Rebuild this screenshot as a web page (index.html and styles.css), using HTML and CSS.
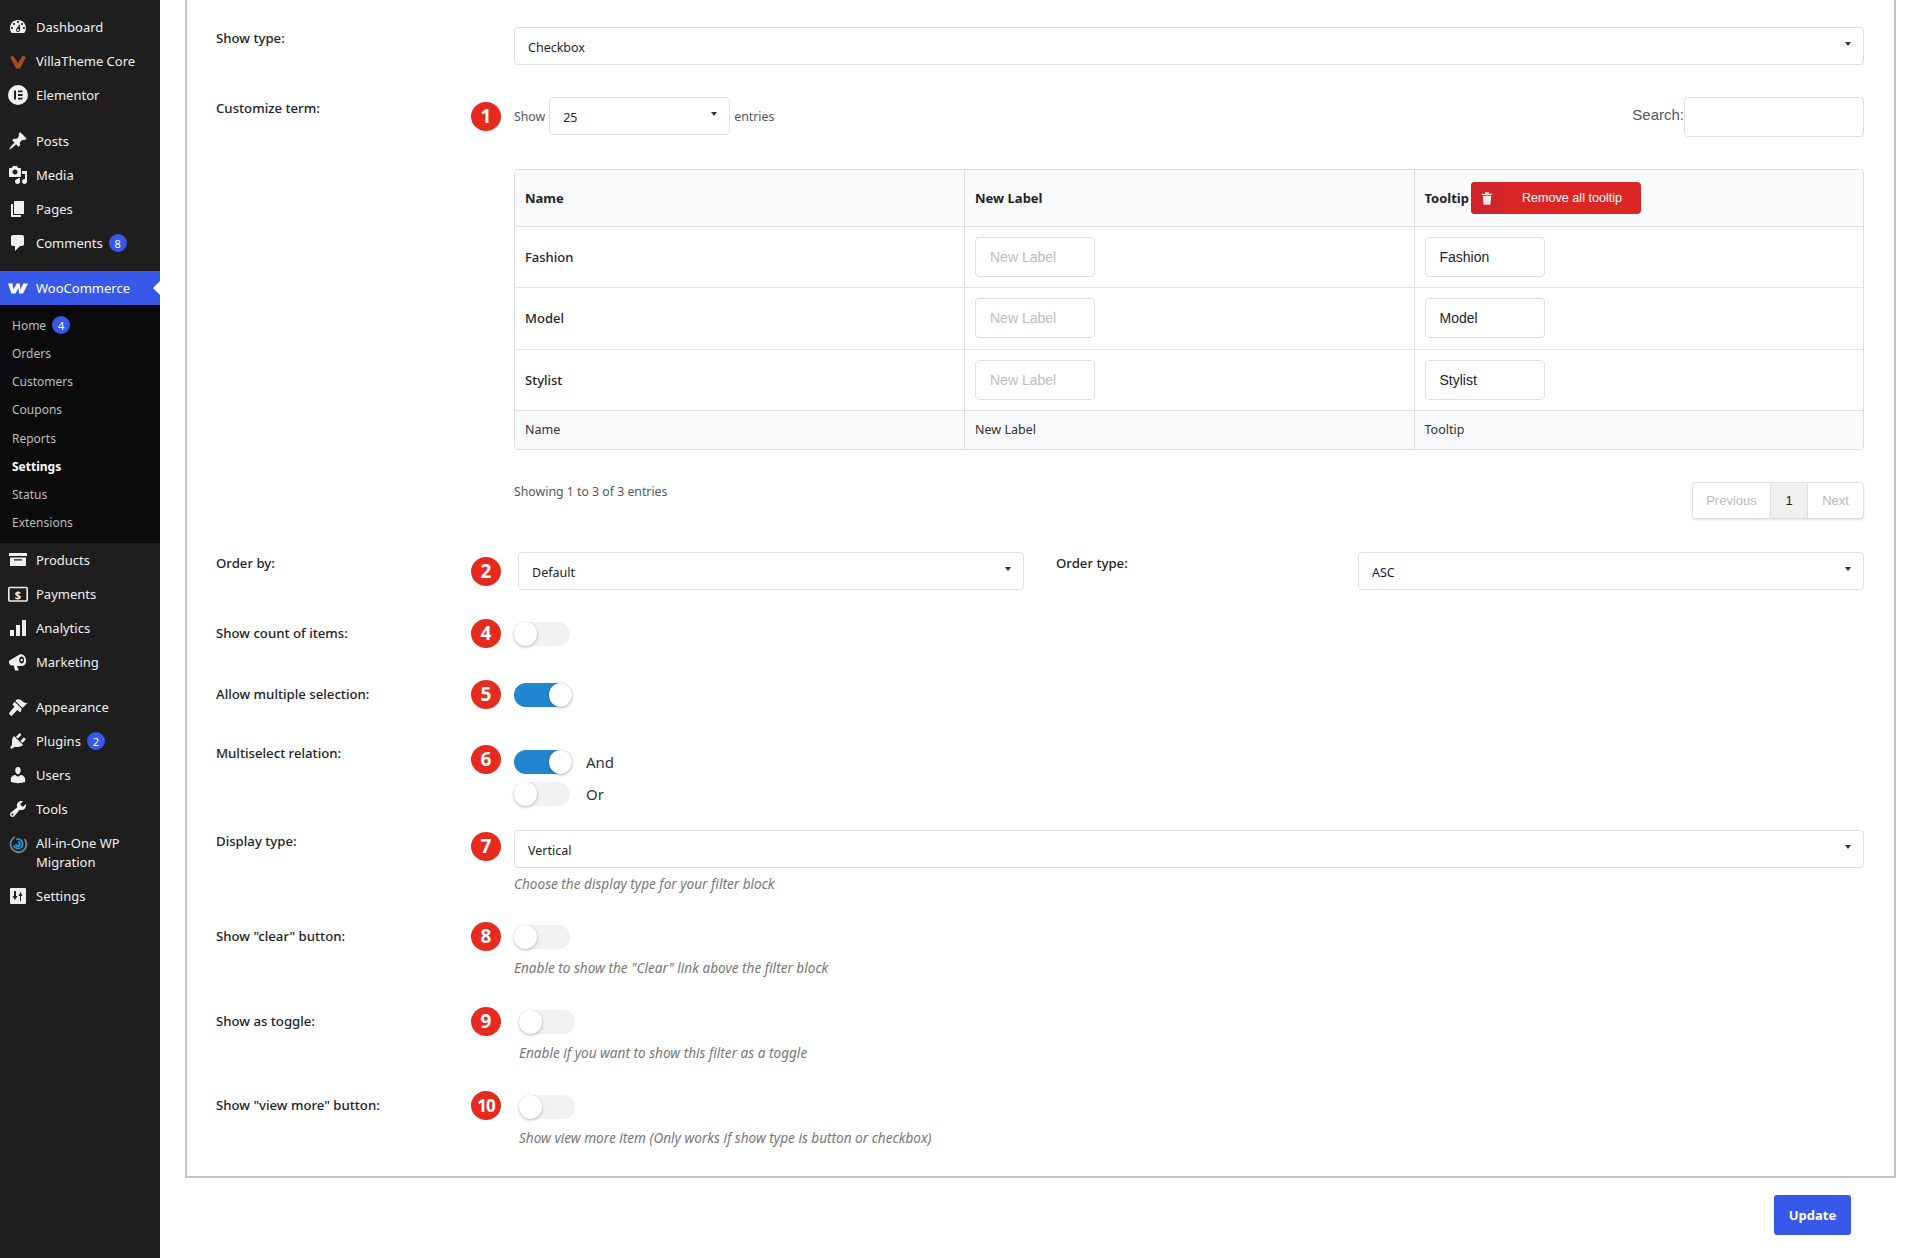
FILE: index.html
```html
<!DOCTYPE html>
<html lang="en">
<head>
<meta charset="utf-8">
<title>Filter block</title>
<link rel="stylesheet" href="styles.css">
</head>
<body>
<div class="page">
  <nav class="sidebar">
    <ul class="menu">
      <li class="item"><svg class="ico" viewBox="0 0 20 20"><path d="M3.76 16h12.48c1.1-1.37 1.76-3.11 1.76-5 0-4.42-3.58-8-8-8s-8 3.58-8 8c0 1.89.66 3.63 1.76 5zM10 4c.55 0 1 .45 1 1s-.45 1-1 1-1-.45-1-1 .45-1 1-1zM6 6c.55 0 1 .45 1 1s-.45 1-1 1-1-.45-1-1 .45-1 1-1zm8 0c.55 0 1 .45 1 1s-.45 1-1 1-1-.45-1-1 .45-1 1-1zm-5.37 5.55L12 7v6c0 1.1-.9 2-2 2s-2-.9-2-2c0-.57.24-1.08.63-1.45zM4 10c.55 0 1 .45 1 1s-.45 1-1 1-1-.45-1-1 .45-1 1-1zm12 0c.55 0 1 .45 1 1s-.45 1-1 1-1-.45-1-1 .45-1 1-1zm-5 3c0-.55-.45-1-1-1s-1 .45-1 1 .45 1 1 1 1-.45 1-1z" fill-rule="evenodd"/></svg>Dashboard</li>
      <li class="item"><svg class="ico" viewBox="0 0 20 20"><path class="villa" d="M2 6l3-1.500L10 12l4.500-7.500 3.500 1.500-6 11.500H8z"/></svg>VillaTheme Core</li>
      <li class="item"><svg class="ico" viewBox="0 0 20 20"><circle cx="10" cy="10" r="10"/><path class="cut" d="M6 5.500h2v9H6zM10 5.500h4.500v1.800H10zM10 9.100h4.500v1.800H10zM10 12.700h4.500v1.800H10z"/></svg>Elementor</li>
    </ul>
    <ul class="menu menu-content">
      <li class="item"><svg class="ico" viewBox="0 0 20 20"><path d="M10.44 3.02l1.82-1.82 6.36 6.35-1.83 1.82c-1.05-.68-2.48-.57-3.41.36l-.75.75c-.92.93-1.04 2.35-.35 3.41l-1.83 1.82-2.41-2.41-2.8 2.79c-.42.42-3.38 2.71-3.8 2.29s1.86-3.39 2.28-3.81l2.79-2.79L4.100 9.360l1.83-1.82c1.05.69 2.48.57 3.4-.36l.75-.75c.93-.92 1.05-2.35.36-3.41z"/></svg>Posts</li>
      <li class="item"><svg class="ico" viewBox="0 0 20 20"><path fill-rule="evenodd" d="M13 11V4c0-.55-.45-1-1-1h-1.670L9 1H5L3.670 3H2c-.55 0-1 .45-1 1v7c0 .55.45 1 1 1h10c.55 0 1-.45 1-1zM7 4.500c1.380 0 2.500 1.120 2.500 2.500S8.380 9.500 7 9.500 4.500 8.380 4.500 7 5.620 4.500 7 4.500zM14 6h5v10.500c0 1.380-1.120 2.500-2.500 2.500S14 17.880 14 16.500s1.120-2.500 2.500-2.500c.17 0 .34.02.5.05V9h-3V6zm-4 8.050V13h2v3.500c0 1.380-1.120 2.500-2.500 2.500S7 17.880 7 16.500 8.120 14 9.500 14c.17 0 .34.02.5.05z"/></svg>Media</li>
      <li class="item"><svg class="ico" viewBox="0 0 20 20"><path d="M6 15V2h10v13H6zm-1 1h8v2H3V5h2v11z"/></svg>Pages</li>
      <li class="item"><svg class="ico" viewBox="0 0 20 20"><path d="M5 2h9c1.100 0 2 .9 2 2v7c0 1.100-.9 2-2 2h-2l-5 5v-5H5c-1.100 0-2-.9-2-2V4c0-1.100.9-2 2-2z"/></svg><span>Comments</span><span class="count">8</span></li>
    </ul>
    <ul class="menu menu-shop">
      <li class="item item-current"><svg class="ico ico-woo" viewBox="0 0 20 20"><path d="M0 5.500h4.500l1 6 3.200-6h3l.8 6 2.700-6H20l-5 10h-3.800l-.8-5.500-3 5.500H3.500z"/></svg>WooCommerce</li>
      <li class="submenu">
        <a class="sub"><span>Home</span><span class="count">4</span></a>
        <a class="sub">Orders</a>
        <a class="sub">Customers</a>
        <a class="sub">Coupons</a>
        <a class="sub">Reports</a>
        <a class="sub sub-current">Settings</a>
        <a class="sub">Status</a>
        <a class="sub">Extensions</a>
      </li>
      <li class="item"><svg class="ico" viewBox="0 0 20 20"><path d="M1 3h18v3H1zM2 7.500h16V16H2zM6 9.200v1.300h8V9.200z" fill-rule="evenodd"/></svg>Products</li>
      <li class="item"><svg class="ico" viewBox="0 0 20 20"><rect class="outline" x=".8" y="3.500" width="18.400" height="13.500" rx="1"/><text class="dollar" x="10" y="14.600">$</text></svg>Payments</li>
      <li class="item"><svg class="ico" viewBox="0 0 20 20"><path d="M18 18V2h-4v16h4zm-6 0V7H8v11h4zm-6 0v-6H2v6h4z"/></svg>Analytics</li>
      <li class="item"><svg class="ico" viewBox="0 0 20 20"><path fill-rule="evenodd" d="M1.500 8.500l10-6c3-1 6 1.500 6.500 5s-1 6.500-4 6.500H9l1.800 4.500H7l-1.200-5H4c-1.500 0-2.800-1.200-3-2.700-.1-1 0-2 .5-2.300zM13.600 4.600c-1.500 0-2.400 1.500-2.400 3.400s1 3.500 2.500 3.500 2.400-1.500 2.400-3.500-1-3.400-2.500-3.400z"/><circle cx="13.700" cy="8" r="1.200"/></svg>Marketing</li>
    </ul>
    <ul class="menu">
      <li class="item"><svg class="ico" viewBox="0 0 20 20"><path d="M14.480 11.060L7.410 3.990l1.500-1.500c.5-.56 2.300-.47 3.510.32 1.210.8 1.430 1.280 2.910 2.100 1.180.64 2.450 1.260 4.450.85zm-.71.71L6.700 4.700 4.930 6.470c-.39.39-.39 1.020 0 1.410l1.060 1.060c.39.39.39 1.030 0 1.420-.6.6-2 2.200-3 3.400L1.200 16c-.6.9 1.900 3.300 2.800 2.700l2.100-2.300c1-1 2.100-2.200 2.700-2.800.39-.39 1.030-.39 1.420 0l1.060 1.060c.39.39 1.020.39 1.410 0z"/></svg>Appearance</li>
      <li class="item"><svg class="ico" viewBox="0 0 20 20"><path d="M13.110 4.360L9.870 7.600 8 5.730l3.240-3.240c.35-.34 1.050-.2 1.560.32.52.51.66 1.210.31 1.550zm-8 1.770l.91-1.120 9.010 9.010-1.190.84c-.71.71-2.630 1.160-3.820 1.160H6.140L4.900 17.260c-.59.59-1.540.59-2.120 0-.59-.58-.59-1.530 0-2.120l1.240-1.240v-3.880c0-1.130.4-3.190 1.090-3.890zm7.260 3.970l3.240-3.240c.34-.35 1.040-.21 1.550.31.52.51.66 1.210.31 1.550l-3.240 3.250z"/></svg><span>Plugins</span><span class="count">2</span></li>
      <li class="item"><svg class="ico" viewBox="0 0 20 20"><path d="M10 9.250c-2.270 0-2.730-3.440-2.730-3.440C7 4.020 7.820 2 9.970 2c2.160 0 2.980 2.020 2.710 3.810 0 0-.41 3.440-2.680 3.440zm0 2.570L12.720 10c2.390 0 4.520 2.330 4.520 4.530v2.490s-3.650 1.130-7.240 1.130c-3.650 0-7.240-1.130-7.240-1.130v-2.490c0-2.250 1.940-4.480 4.470-4.480z"/></svg>Users</li>
      <li class="item"><svg class="ico" viewBox="0 0 20 20"><path fill-rule="evenodd" d="M16.680 9.770c-1.340 1.340-3.300 1.670-4.950.99l-5.410 6.520c-.99.99-2.590.99-3.580 0s-.99-2.590 0-3.570l6.520-5.420c-.68-1.650-.35-3.610.99-4.950 1.280-1.280 3.120-1.620 4.720-1.060l-2.890 2.890 2.820 2.820 2.860-2.870c.53 1.580.18 3.390-1.080 4.650zM3.810 16.210c.4.39 1.040.39 1.430 0 .4-.4.4-1.040 0-1.430-.39-.4-1.030-.4-1.430 0-.39.39-.39 1.030 0 1.430z"/></svg>Tools</li>
      <li class="item item-wrap"><svg class="ico" viewBox="0 0 20 20"><path class="ring" d="M7 3a8 8 0 1 0 9.500 2"/><path class="arc" d="M5.500 11.500a4.800 4.800 0 0 0 9.200-1.500 4.800 4.800 0 0 0-6.500-4.500"/><path class="arc" d="M8 10a2 2 0 1 0 2-2"/></svg><span>All-in-One WP Migration</span></li>
      <li class="item"><svg class="ico" viewBox="0 0 20 20"><path fill-rule="evenodd" d="M3 2h14a1 1 0 0 1 1 1v14a1 1 0 0 1-1 1H3a1 1 0 0 1-1-1V3a1 1 0 0 1 1-1zM6 5v5H4.500L7 14l2.500-4H8V5zm7 10v-5h1.500L12.500 6 10.500 10H12v5z"/></svg>Settings</li>
    </ul>
  </nav>

  <main class="main">
    <form class="panel">
      <div class="row row-show-type">
        <label class="label">Show type:</label>
        <span></span>
        <div class="field"><div class="select">Checkbox</div></div>
      </div>

      <div class="row row-terms">
        <label class="label">Customize term:</label>
        <span class="step step-select">1</span>
        <div class="field">
          <div class="dt-top">
            <div class="dt-length">Show <div class="select select-length">25</div> entries</div>
            <div class="dt-search"><span>Search:</span><input class="search" type="text"></div>
          </div>
          <div class="table-box">
          <table class="terms">
            <thead>
              <tr><th>Name</th><th>New Label</th>
                <th><div class="tip-head">Tooltip
                  <button type="button" class="remove"><span class="remove-ico"><svg class="trash" viewBox="0 0 14 16"><path d="M1 3h12v1.500H1zM4.800 1.200h4.400V3H4.800zM2 5.500h10L11 16H3z"/></svg></span><span class="remove-text">Remove all tooltip</span></button>
                </div></th></tr>
            </thead>
            <tbody>
              <tr class="r1"><td class="term">Fashion</td><td><input class="text" placeholder="New Label"></td><td><input class="text" value="Fashion"></td></tr>
              <tr class="r2"><td class="term">Model</td><td><input class="text" placeholder="New Label"></td><td><input class="text" value="Model"></td></tr>
              <tr class="r3"><td class="term">Stylist</td><td><input class="text" placeholder="New Label"></td><td><input class="text" value="Stylist"></td></tr>
            </tbody>
            <tfoot><tr><td>Name</td><td>New Label</td><td>Tooltip</td></tr></tfoot>
          </table>
          </div>
          <div class="dt-bottom">
            <div class="dt-info">Showing 1 to 3 of 3 entries</div>
            <div class="pager"><span class="pg pg-prev">Previous</span><span class="pg pg-on">1</span><span class="pg pg-next">Next</span></div>
          </div>
        </div>
      </div>

      <div class="row row-order">
        <label class="label">Order by:</label>
        <span class="step step-select">2</span>
        <div class="field order">
          <div class="select">Default</div>
          <label class="label order-label">Order type:</label>
          <div class="select">ASC</div>
        </div>
      </div>

      <div class="row row-toggle row-count">
        <label class="label">Show count of items:</label>
        <span class="step">4</span>
        <div class="field"><span class="toggle"></span></div>
      </div>

      <div class="row row-toggle row-multi">
        <label class="label">Allow multiple selection:</label>
        <span class="step">5</span>
        <div class="field"><span class="toggle toggle-on"></span></div>
      </div>

      <div class="row row-relation">
        <label class="label">Multiselect relation:</label>
        <span class="step">6</span>
        <div class="field relation">
          <div class="opt"><span class="toggle toggle-on"></span><span>And</span></div>
          <div class="opt"><span class="toggle"></span><span>Or</span></div>
        </div>
      </div>

      <div class="row row-display">
        <label class="label">Display type:</label>
        <span class="step step-display">7</span>
        <div class="field">
          <div class="select">Vertical</div>
          <p class="desc">Choose the display type for your filter block</p>
        </div>
      </div>

      <div class="row row-toggle row-clear">
        <label class="label">Show "clear" button:</label>
        <span class="step">8</span>
        <div class="field">
          <span class="toggle"></span>
          <p class="desc">Enable to show the "Clear" link above the filter block</p>
        </div>
      </div>

      <div class="row row-toggle row-as-toggle">
        <label class="label">Show as toggle:</label>
        <span class="step">9</span>
        <div class="field field-shift">
          <span class="toggle"></span>
          <p class="desc">Enable if you want to show this filter as a toggle</p>
        </div>
      </div>

      <div class="row row-toggle row-more">
        <label class="label">Show "view more" button:</label>
        <span class="step step-ten">10</span>
        <div class="field field-shift">
          <span class="toggle"></span>
          <p class="desc">Show view more item (Only works if show type is button or checkbox)</p>
        </div>
      </div>
    </form>
    <div class="actions"><button type="button" class="update">Update</button></div>
  </main>
</div>
</body>
</html>
```
FILE: styles.css
```css
* { box-sizing: border-box; }
html, body { margin: 0; padding: 0; background: #fff; }
body { font-family: "Noto Sans", "Open Sans", sans-serif; font-size: 13px; color: #1d2327; }
.page { display: flex; height: 1258px; overflow: hidden; }

/* Sidebar */
.sidebar { width: 160px; flex: none; background: #1e1e1e; padding-top: 10px; color: #f0f0f0; font-size: 13px; }
.menu { list-style: none; margin: 0 0 12px; padding: 0; }
.menu-content { margin-bottom: 11px; }
.menu-shop { margin-bottom: 11px; }
.item { display: flex; align-items: center; height: 34px; padding-left: 8px; line-height: 19px; }
.item-current { background: #3858e9; color: #fff; position: relative; }
.item-current::after { content: ""; position: absolute; right: 0; top: 10px; border: 7px solid transparent; border-right-color: #fff; border-left-width: 0; }
.item-wrap { height: 53px; align-items: flex-start; padding-top: 8px; }
.ico { width: 20px; height: 20px; flex: none; margin-right: 8px; fill: #f0f0f0; }
.ico-woo { fill: #fff; }
.villa { fill: #a64a25; }
.cut { fill: #1e1e1e; }
.outline { fill: none; stroke: #f0f0f0; stroke-width: 1.600; }
.dollar { font: 700 11px "Noto Sans", sans-serif; text-anchor: middle; }
.ring { fill: none; stroke: #7c8288; stroke-width: 1.800; }
.arc { fill: none; stroke: #1b9ee0; stroke-width: 1.800; }
.count { display: inline-flex; align-items: center; justify-content: center; width: 18px; height: 18px; margin-left: 6px; border-radius: 50%; background: #3858e9; color: #fff; font-size: 11px; }
.submenu { background: #0b0b0c; padding: 6px 0; display: block; }
.sub { display: flex; align-items: center; height: 28.250px; padding-left: 12px; color: #bdbdbd; font-size: 12px; }
.sub-current { color: #fff; font-weight: 700; }

/* Main */
.main { flex: 1; min-width: 0; padding: 0 9px 0 25px; }
.panel { border: solid #c3c4c7; border-width: 0 2px 2px; height: 1178px; padding: 27px 30px 0 29px; }
.row { display: grid; grid-template-columns: 255px 43px 1fr; align-items: start; }
.label { display: block; font-weight: 500; font-size: 13.200px; line-height: 22px; color: #1d2327; }
.step { display: flex; align-items: center; justify-content: center; width: 30px; height: 29px; border-radius: 50%; background: #e52b20; color: #fff; font-weight: 700; font-size: 19px; line-height: 1; }
.step-select { margin-top: 5px; }
.step-display { margin-top: 2px; }
.step-ten { font-size: 17px; letter-spacing: -1px; }
.field { min-width: 0; }
.field-shift { padding-left: 5px; }

.row-terms { margin-top: 32px; }
.row-order { margin-top: 33px; }
.row-count { margin-top: 29px; }
.row-multi { margin-top: 32px; }
.row-relation { margin-top: 36px; }
.row-display { margin-top: 16px; }
.row-clear { margin-top: 28px; }
.row-as-toggle { margin-top: 29px; }
.row-more { margin-top: 28px; }
.row-toggle .label { margin-top: 3px; }
.row-toggle .toggle { margin-top: 3px; }
.row-relation .label { margin-top: -3px; }
.row-more .toggle { margin-top: 4px; }

.select { position: relative; height: 38px; border: 1px solid #dedede; border-radius: 4px; background: #fff; padding: 9px 13px 0; font-size: 12.500px; line-height: 22px; color: #1d2327; }
.select::after { content: ""; position: absolute; right: 12px; top: 14px; border: 3.500px solid transparent; border-top: 4px solid #333; border-bottom-width: 0; }

.dt-top { display: flex; justify-content: space-between; align-items: flex-start; }
.dt-length { display: flex; align-items: center; gap: 4px; font-size: 12.300px; color: #50575e; }
.select-length { width: 181px; }
.dt-search { display: flex; align-items: flex-start; font-family: "Liberation Sans", Arial, sans-serif; font-size: 15px; line-height: 22px; color: #50575e; }
.dt-search span { margin-top: 7px; }
.search { width: 180px; height: 40px; border: 1px solid #dedede; border-radius: 4px; background: #fff; padding: 0 10px; margin: 0; }

.table-box { margin-top: 32px; border: 1px solid #dedede; border-radius: 4px; overflow: hidden; }
.terms { width: 100%; border-collapse: collapse; table-layout: fixed; }
.terms th, .terms td { padding: 0 10px; text-align: left; border-left: 1px solid #dedede; font-size: 13px; }
.terms th:first-child, .terms td:first-child { border-left: 0; }
.terms thead th:nth-child(-n+2) { width: 449.500px; }
.terms thead th { height: 56px; background: #f9fafb; font-weight: 700; border-bottom: 1px solid #dedede; }
.terms tbody td { border-bottom: 1px solid #e5e5e5; }
.r1 td, .r3 td { height: 61px; }
.r2 td { height: 62px; }
.terms .term { font-weight: 500; }
.terms tfoot td { height: 39px; background: #f9fafb; font-size: 12.500px; font-weight: 400; color: #2c3338; }
.terms tbody tr:last-child td { border-bottom: 1px solid #dedede; }
.tip-head { display: flex; align-items: center; gap: 2px; }
.remove { display: inline-flex; align-items: stretch; height: 32px; width: 170px; padding: 0; border: 0; border-radius: 4px; overflow: hidden; background: #dc2626; color: #fff; font-family: "Liberation Sans", Arial, sans-serif; font-size: 12.600px; }
.remove-ico { width: 33px; display: flex; align-items: center; justify-content: center; background: #cf2229; }
.trash { width: 12px; height: 14px; fill: #fde6e6; }
.remove-text { flex: 1; display: flex; align-items: center; padding-left: 18px; }
.text { display: block; width: 120px; height: 40px; border: 1px solid #dedede; border-radius: 4px; padding: 0 14px; font-family: "Liberation Sans", Arial, sans-serif; font-size: 14px; color: #1d2327; background: #fff; margin: 0; }
.text::placeholder { color: #bdbdbd; opacity: 1; }

.dt-bottom { display: flex; justify-content: space-between; align-items: flex-start; margin-top: 32px; }
.dt-info { font-size: 12.300px; line-height: 18px; padding-top: 1px; color: #50575e; }
.pager { display: flex; height: 37px; border: 1px solid #dedede; border-radius: 4px; box-shadow: 0 1px 2px rgba(0,0,0,.12); font-family: "Liberation Sans", Arial, sans-serif; font-size: 13px; color: #bbb; overflow: hidden; }
.pg { display: flex; align-items: center; justify-content: center; }
.pg-prev { width: 77px; }
.pg-on { width: 38px; background: #f0f0f0; color: #1d2327; border-left: 1px solid #dedede; border-right: 1px solid #dedede; }
.pg-next { width: 55px; }

.order { display: grid; grid-template-columns: 506px 334px 1fr; padding-left: 4px; }
.order-label { padding-left: 32px; }
.relation { padding-top: 5px; }
.opt { display: grid; grid-template-columns: 58px auto; column-gap: 14px; align-items: center; height: 24px; margin-bottom: 8px; font-size: 15px; color: #2c3338; }

.toggle { display: block; position: relative; width: 56px; height: 24px; border-radius: 12px; background: #f1f1f1; }
.toggle::before { content: ""; position: absolute; left: 0; top: 0; width: 23px; height: 24px; border-radius: 50%; background: #fff; box-shadow: 0 1px 3px rgba(0,0,0,.3); }
.toggle-on { background: #2185d0; width: 58px; }
.toggle-on::before { left: auto; right: 0; }

.desc { margin: 6px 0 0; font-size: 13.600px; font-style: italic; line-height: 20px; color: #777; }
.row-clear .desc, .row-as-toggle .desc, .row-more .desc { margin-top: 9px; }

.actions { display: flex; justify-content: flex-end; padding: 17px 45px 0 0; }
.update { width: 77px; height: 40px; border: 0; border-radius: 3px; background: #3858e9; color: #fff; font-family: "Noto Sans", sans-serif; font-weight: 700; font-size: 13px; }
```
